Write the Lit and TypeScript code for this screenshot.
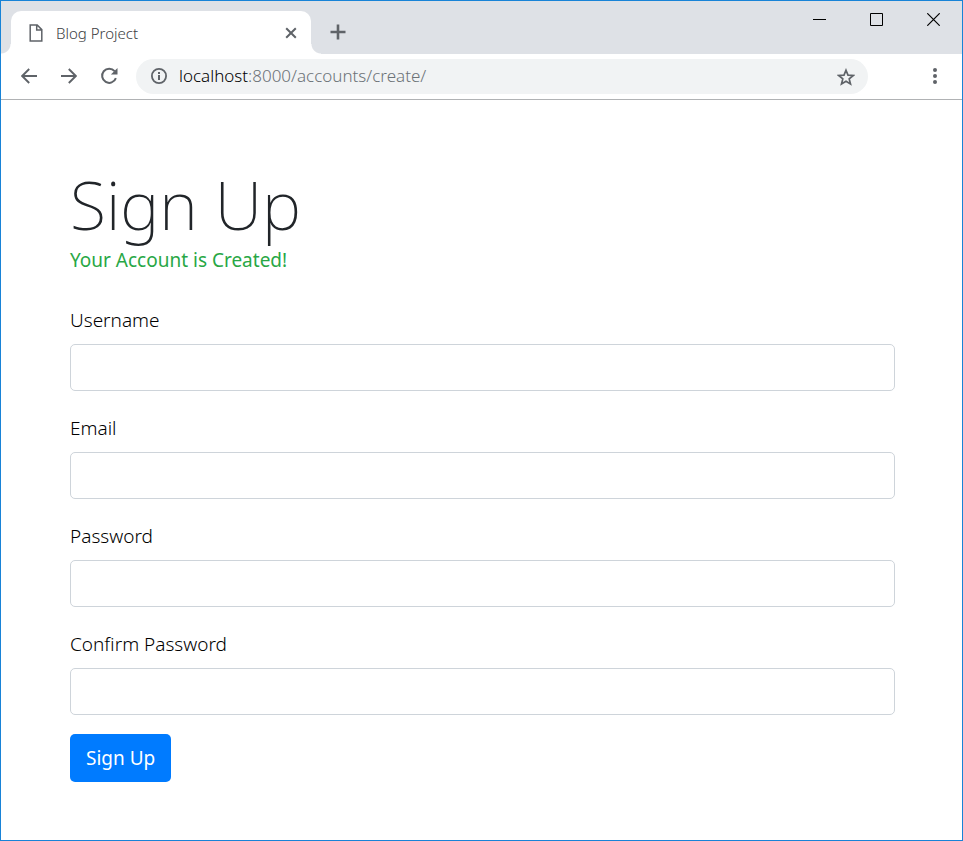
import { LitElement, html, css, svg } from "lit";
import { customElement } from "lit/decorators.js";

const icon = (w: number, h: number, body: unknown) =>
  html`<svg width=${w} height=${h} viewBox="0 0 ${w} ${h}" fill="none" aria-hidden="true">${body}</svg>`;

const icons = {
  file: icon(14, 18, svg`<path d="M1.2 1h7l4.6 4.6v11.4H1.2z M7.7 1v5.1h5.1" stroke="#5f6368" stroke-width="1.5"/>`),
  closeTab: icon(12, 12, svg`<path d="M1.2 1.2l9.6 9.6M10.8 1.2l-9.6 9.6" stroke="#5f6368" stroke-width="2"/>`),
  plus: icon(16, 16, svg`<path d="M8 .5v15M.5 8h15" stroke="#5f6368" stroke-width="2.6"/>`),
  minimize: icon(13, 13, svg`<path d="M0 6.5h13" stroke="#000"/>`),
  maximize: icon(13, 13, svg`<path d="M.5.5h12v12H.5z" stroke="#000"/>`),
  close: icon(13, 13, svg`<path d="M.3.3l12.4 12.4M12.7.3L.3 12.7" stroke="#000" stroke-width="1.2"/>`),
  back: icon(16, 16, svg`<path d="M16 8H1.5M8.2 1L1.2 8l7 7" stroke="#5f6368" stroke-width="1.9"/>`),
  forward: icon(16, 16, svg`<path d="M0 8h14.5M7.8 1l7 7-7 7" stroke="#5f6368" stroke-width="1.9"/>`),
  reload: icon(18, 18, svg`<path d="M15.9 11.2A7.1 7.1 0 1 1 14.6 4.1" stroke="#5f6368" stroke-width="2"/><path d="M17.5 1v6.6h-6.6z" fill="#5f6368"/>`),
  info: icon(16, 16, svg`<circle cx="8" cy="8" r="7.1" stroke="#5f6368" stroke-width="1.8"/><path d="M7 7h2v5H7zM7 4h2v2H7z" fill="#5f6368"/>`),
  star: icon(18, 18, svg`<path d="M9 2.2l2 4.9 5.3.4-4.1 3.4 1.3 5.1L9 13.2 4.5 16l1.3-5.1-4.1-3.4L7 7.1z" stroke="#5f6368" stroke-width="1.7"/>`),
  menu: icon(4, 16, svg`<g fill="#5f6368"><circle cx="2" cy="2" r="2"/><circle cx="2" cy="8" r="2"/><circle cx="2" cy="14" r="2"/></g>`),
};

const fields = [
  { id: "username", label: "Username", type: "text" },
  { id: "email", label: "Email", type: "email" },
  { id: "password", label: "Password", type: "password" },
  { id: "confirm", label: "Confirm Password", type: "password" },
];

@customElement("app-root")
export class AppRoot extends LitElement {
  static styles = css`
    :host {
      display: flex;
      flex-direction: column;
      box-sizing: border-box;
      min-height: 100vh;
      border: 1px solid #1883d7;
      background: #fff;
      color: #212529;
      font-family: "Segoe UI", "Noto Sans", "Open Sans", sans-serif;
    }
    * { box-sizing: border-box; }
    svg { display: block; flex: none; }
    .icon-button {
      display: grid;
      place-items: center;
      padding: 0;
      border: 0;
      background: none;
      flex: none;
    }
    .strip {
      display: flex;
      height: 53px;
      background: #dee1e6;
    }
    .edge {
      flex: none;
      width: 10px;
      height: 10px;
      align-self: flex-end;
      background: radial-gradient(circle at 0 0, #dee1e6 9px, #fff 10px);
    }
    .edge.right { background: radial-gradient(circle at 100% 0, #dee1e6 9px, #fff 10px); }
    .tab {
      display: flex;
      align-items: center;
      flex: 0 1 300px;
      height: 43px;
      margin-top: 10px;
      padding: 0 12px 0 18px;
      border-radius: 10px 10px 0 0;
      background: #fff;
    }
    .tab-title {
      flex: 1;
      margin-left: 13px;
      font-size: 15px;
      font-weight: 300;
      line-height: 20px;
      color: #3c4043;
    }
    .small { width: 16px; height: 16px; }
    .new-tab { width: 34px; height: 36px; align-self: flex-end; margin-bottom: 4px; }
    .window { display: flex; margin-left: auto; }
    .window .icon-button { width: 57px; height: 36px; }
    .toolbar {
      display: flex;
      align-items: center;
      height: 46px;
      padding: 0 17px 2px 8px;
      border-bottom: 1px solid #b0b2b4;
    }
    .tool { width: 40px; height: 36px; }
    .address {
      display: flex;
      align-items: center;
      flex: 1;
      height: 35px;
      margin: 1px 57px 0 7px;
      padding: 0 15px;
      border-radius: 18px;
      background: #f1f3f4;
    }
    .url {
      flex: 1;
      margin-left: 12px;
      font-size: 17px;
      font-weight: 300;
      line-height: 24px;
      color: #6c7277;
      text-decoration: none;
    }
    .host { color: #000; }
    .menu { width: 20px; height: 36px; }
    .page { padding: 64px 67px 58px 69px; }
    h1 {
      margin: 0;
      font-size: 66px;
      font-weight: 200;
      line-height: 81px;
    }
    .success {
      margin: 0 0 31px;
      font-size: 19px;
      line-height: 30px;
      color: #28a745;
    }
    .fields { display: grid; gap: 23px; }
    label {
      display: block;
      margin-bottom: 9px;
      font-size: 19px;
      font-weight: 300;
      line-height: 29px;
      color: #000;
    }
    input {
      display: block;
      width: 100%;
      height: 47px;
      padding: 8px 14px;
      border: 1px solid #ced4da;
      border-radius: 5px;
      background: #fff;
      color: #495057;
      font: inherit;
      font-size: 19px;
    }
    .submit {
      display: block;
      height: 48px;
      margin-top: 19px;
      padding: 0 16px;
      border: 0;
      border-radius: 5px;
      background: #007bff;
      color: #fff;
      font: inherit;
      font-size: 19px;
    }
  `;

  render() {
    return html`
      <header class="strip">
        <span class="edge"></span>
        <div class="tab">
          ${icons.file}
          <span class="tab-title">Blog Project</span>
          <button class="icon-button small" aria-label="Close tab">${icons.closeTab}</button>
        </div>
        <span class="edge right"></span>
        <button class="icon-button new-tab" aria-label="New tab">${icons.plus}</button>
        <div class="window">
          <button class="icon-button" aria-label="Minimize">${icons.minimize}</button>
          <button class="icon-button" aria-label="Maximize">${icons.maximize}</button>
          <button class="icon-button" aria-label="Close">${icons.close}</button>
        </div>
      </header>
      <nav class="toolbar">
        <button class="icon-button tool" aria-label="Back">${icons.back}</button>
        <button class="icon-button tool" aria-label="Forward">${icons.forward}</button>
        <button class="icon-button tool" aria-label="Reload">${icons.reload}</button>
        <div class="address">
          ${icons.info}
          <a class="url" href="#"><span class="host">localhost</span>:8000/accounts/create/</a>
          <button class="icon-button small" aria-label="Bookmark">${icons.star}</button>
        </div>
        <button class="icon-button menu" aria-label="Menu">${icons.menu}</button>
      </nav>
      <main class="page">
        <h1>Sign Up</h1>
        <p class="success">Your Account is Created!</p>
        <form @submit=${(e: Event) => e.preventDefault()}>
          <div class="fields">
            ${fields.map(
              (f) => html`<div>
                <label for=${f.id}>${f.label}</label>
                <input id=${f.id} name=${f.id} type=${f.type} />
              </div>`
            )}
          </div>
          <button class="submit" type="submit">Sign Up</button>
        </form>
      </main>
    `;
  }
}
